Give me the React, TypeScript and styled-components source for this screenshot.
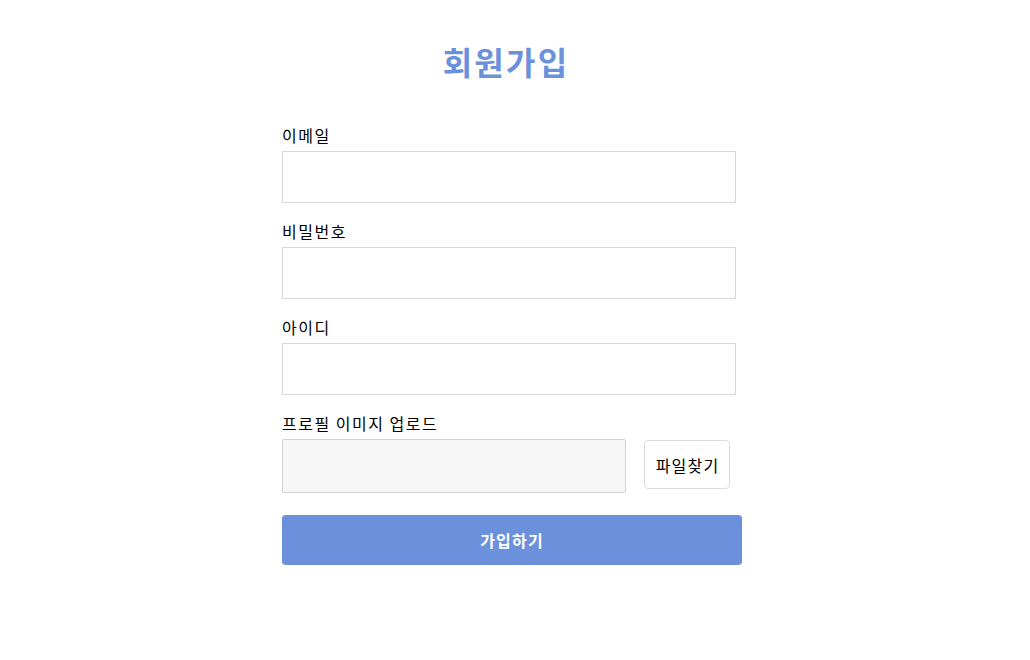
import React from "react";
import styled, { createGlobalStyle } from "styled-components";

const Global = createGlobalStyle`
  html, body { margin: 0; padding: 0; background: #fff; }
  body { font-family: "Noto Sans CJK KR", "Noto Sans", sans-serif; color: #000; }
  * { box-sizing: border-box; }
`;

const Page = styled.div`
  width: 1030px;
  display: flex;
  flex-direction: column;
  align-items: center;
  padding-top: 41px;
`;

const Title = styled.h1`
  margin: 0 18px 0 0;
  height: 40px;
  line-height: 40px;
  font-size: 32px;
  font-weight: 700;
  letter-spacing: 2.2px;
  color: #6b91dc;
`;

const Form = styled.form`
  width: 460px;
  margin: 42px 6px 0 0;
  display: flex;
  flex-direction: column;
`;

const Field = styled.div`
  display: flex;
  flex-direction: column;
  gap: 4px;
  margin-bottom: 16px;
`;

const Label = styled.label`
  font-size: 16px;
  line-height: 24px;
  height: 24px;
  letter-spacing: 1.5px;
`;

const TextInput = styled.input`
  width: 454px;
  height: 52px;
  border: 1px solid #d6d6d6;
  background: #fff;
  padding: 0 12px;
  font-size: 16px;
  outline: none;
`;

const FileRow = styled.div`
  display: flex;
  align-items: center;
  gap: 18px;
`;

const FileBox = styled.div`
  width: 344px;
  height: 54px;
  border: 1px solid #d2d2d2;
  border-radius: 2px;
  background: #f7f7f7;
`;

const FileButton = styled.button`
  width: 86px;
  height: 49px;
  margin-top: -3px;
  border: 1px solid #dcdcdc;
  border-radius: 4px;
  background: #fff;
  font-family: inherit;
  font-size: 16px;
  letter-spacing: 1.2px;
  color: #000;
  padding: 0 0 0 1px;
`;

const Submit = styled.button`
  margin-top: 6px;
  width: 460px;
  height: 50px;
  border: none;
  border-radius: 4px;
  background: #6b91dc;
  color: #fff;
  font-family: inherit;
  font-size: 16px;
  font-weight: 700;
  letter-spacing: 1.2px;
  padding: 0 0 0 0;
`;

export default function App() {
  return (
    <>
      <Global />
      <Page>
        <Title>회원가입</Title>
        <Form onSubmit={(e) => e.preventDefault()}>
          <Field>
            <Label>이메일</Label>
            <TextInput type="text" />
          </Field>
          <Field>
            <Label>비밀번호</Label>
            <TextInput type="password" />
          </Field>
          <Field>
            <Label>아이디</Label>
            <TextInput type="text" />
          </Field>
          <Field>
            <Label>프로필 이미지 업로드</Label>
            <FileRow>
              <FileBox />
              <FileButton type="button">파일찾기</FileButton>
            </FileRow>
          </Field>
          <Submit type="submit">가입하기</Submit>
        </Form>
      </Page>
    </>
  );
}
